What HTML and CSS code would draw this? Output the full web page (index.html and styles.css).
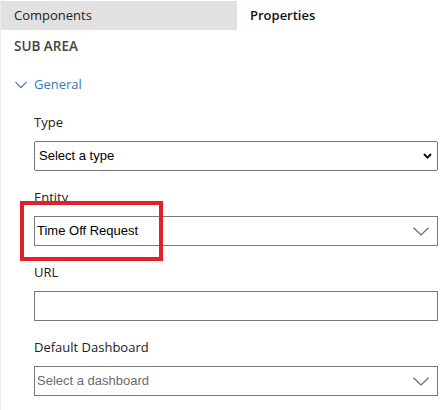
FILE: index.html
```html
<!DOCTYPE html>
<html>
<head>
<meta charset="utf-8">
<link rel="stylesheet" href="styles.css">
</head>
<body>
<div class="panel">
  <div class="tabs">
    <div class="tab tab-inactive">Components</div>
    <div class="tab tab-active">Properties</div>
  </div>
  <div class="section-title">SUB AREA</div>
  <div class="group-toggle">
    <svg class="group-chevron" width="12" height="8" viewBox="0 0 12 8"><path d="M0.5 0.8 L6 6.6 L11.5 0.8" fill="none" stroke="#3a78b5" stroke-width="1.1"/></svg>
    <span>General</span>
  </div>
  <div class="fields">
    <div class="field">
      <div class="label">Type</div>
      <div class="control control-native">
        <span class="value">Select a type</span>
        <svg class="chev-bold" width="9" height="6" viewBox="0 0 9 6"><path d="M1 1 L4.5 4.6 L8 1" fill="none" stroke="#111" stroke-width="2"/></svg>
      </div>
    </div>
    <div class="field field-highlight">
      <div class="label">Entity</div>
      <div class="control">
        <span class="value">Time Off Request</span>
        <svg class="chev-thin" width="16" height="9" viewBox="0 0 16 9"><path d="M0.5 0.7 L8 8 L15.5 0.7" fill="none" stroke="#666" stroke-width="1.2"/></svg>
      </div>
      <div class="highlight"></div>
    </div>
    <div class="field">
      <div class="label">URL</div>
      <div class="control"></div>
    </div>
    <div class="field">
      <div class="label">Default Dashboard</div>
      <div class="control">
        <span class="value placeholder">Select a dashboard</span>
        <svg class="chev-thin" width="16" height="9" viewBox="0 0 16 9"><path d="M0.5 0.7 L8 8 L15.5 0.7" fill="none" stroke="#666" stroke-width="1.2"/></svg>
      </div>
    </div>
  </div>
</div>
</body>
</html>
```

FILE: styles.css
```css
* { box-sizing: border-box; }
html, body { margin: 0; padding: 0; background: #fff; }
body { font-family: "Open Sans", "Noto Sans", sans-serif; color: #222; }
.panel {
  width: 448px;
  height: 410px;
  border-left: 1px solid #ececec;
  overflow: hidden;
}
.tabs {
  display: grid;
  grid-template-columns: 236px 1fr;
  height: 30px;
  padding-top: 1px;
}
.tab {
  font-size: 13px;
  line-height: 29px;
  padding-left: 13px;
}
.tab-inactive { background: #e1e1e1; color: #222; }
.tab-active { background: #fff; color: #111; font-weight: 600; }
.section-title {
  margin: 8px 0 0 13px;
  font-size: 13.5px;
  line-height: 16px;
  font-weight: 600;
  color: #444;
}
.group-toggle {
  margin: 22px 0 0 14px;
  display: flex;
  align-items: center;
  gap: 7px;
  font-size: 13px;
  line-height: 16px;
  color: #3a78b5;
}
.group-chevron { display: block; margin-top: 1px; }
.fields {
  margin-top: 22px;
  padding: 0 10px 0 33px;
  display: flex;
  flex-direction: column;
  gap: 18px;
}
.field { position: relative; }
.label {
  font-size: 13px;
  line-height: 16px;
  color: #222;
  margin-bottom: 11px;
}
.control {
  height: 30px;
  border: 1px solid #7a7a7a;
  display: flex;
  align-items: center;
  justify-content: space-between;
  padding: 0 8px 0 2px;
  font-family: "Liberation Sans", Arial, sans-serif;
  font-size: 13px;
  color: #000;
}
.control-native {
  border-color: #767676;
  border-radius: 2px;
  padding: 0 5px 0 4px;
}
.value { line-height: 16px; }
.placeholder { color: #6b6b6b; }
.chev-bold, .chev-thin { display: block; }
.highlight {
  position: absolute;
  left: -14px;
  top: 12px;
  width: 143px;
  height: 60px;
  border: 4px solid #e0202c;
  pointer-events: none;
}
```
